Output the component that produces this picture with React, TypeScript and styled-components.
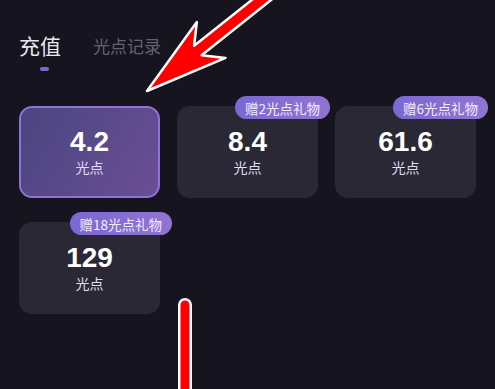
import React from "react";
import styled, { createGlobalStyle } from "styled-components";

const GlobalStyle = createGlobalStyle`
  html, body {
    margin: 0;
    padding: 0;
    background: #16141f;
    width: 495px;
    height: 389px;
    overflow: hidden;
  }
  body {
    font-family: "Noto Sans", "Noto Sans CJK SC", sans-serif;
  }
`;

const Page = styled.div`
  position: relative;
  width: 495px;
  height: 389px;
  box-sizing: border-box;
  padding: 31px 18px 0 19px;
  background: #16141f;
`;

const Tabs = styled.div`
  display: flex;
  align-items: center;
  gap: 32px;
  height: 28px;
`;

const Tab = styled.div<{ $active?: boolean }>`
  font-family: "Noto Sans CJK SC", sans-serif;
  font-size: ${(p) => (p.$active ? "21px" : "17px")};
  line-height: 28px;
  color: ${(p) => (p.$active ? "#e9e7f0" : "#64616f")};
  margin-top: ${(p) => (p.$active ? "0" : "2px")};
`;

const Indicator = styled.div`
  width: 9px;
  height: 4px;
  border-radius: 2px;
  background: #7a66d2;
  margin: 8px 0 0 21px;
`;

const Grid = styled.div`
  display: grid;
  grid-template-columns: repeat(3, 141px);
  column-gap: 17px;
  row-gap: 24px;
  margin-top: 35px;
`;

const Card = styled.div<{ $selected?: boolean }>`
  position: relative;
  height: 92px;
  box-sizing: border-box;
  border-radius: 13px;
  display: flex;
  flex-direction: column;
  align-items: center;
  justify-content: center;
  padding-bottom: 2px;
  background: ${(p) =>
    p.$selected
      ? "linear-gradient(120deg, #4b4580 0%, #5a4a8a 50%, #6c4e95 100%)"
      : "#2a2834"};
  border: 2px solid ${(p) => (p.$selected ? "#8e72d6" : "transparent")};
`;

const Amount = styled.div`
  font-family: "Liberation Sans", "Noto Sans", sans-serif;
  font-weight: 700;
  font-size: 28px;
  line-height: 31px;
  color: #ffffff;
`;

const Unit = styled.div`
  font-family: "Noto Sans CJK SC", sans-serif;
  font-size: 14px;
  line-height: 20px;
  color: #e2def0;
`;

const Badge = styled.div`
  position: absolute;
  top: -12px;
  right: -14px;
  height: 23px;
  padding: 0 10px;
  border-radius: 12px;
  display: flex;
  align-items: center;
  background: linear-gradient(90deg, #7b68d2 0%, #9174d2 100%);
  font-family: "Noto Sans CJK SC", sans-serif;
  font-size: 13.5px;
  color: #f1ecff;
  white-space: nowrap;
`;

const Overlay = styled.svg`
  position: absolute;
  left: 0;
  top: 0;
  width: 495px;
  height: 389px;
  pointer-events: none;
`;

const items = [
  { amount: "4.2", gift: "", selected: true },
  { amount: "8.4", gift: "赠2光点礼物" },
  { amount: "61.6", gift: "赠6光点礼物" },
  { amount: "129", gift: "赠18光点礼物" },
];

export default function App() {
  return (
    <>
      <GlobalStyle />
      <Page>
        <Tabs>
          <Tab $active>充值</Tab>
          <Tab>光点记录</Tab>
        </Tabs>
        <Indicator />
        <Grid>
          {items.map((it) => (
            <Card key={it.amount} $selected={it.selected}>
              {it.gift && <Badge>{it.gift}</Badge>}
              <Amount>{it.amount}</Amount>
              <Unit>光点</Unit>
            </Card>
          ))}
        </Grid>
        <Overlay viewBox="0 0 495 389">
          <g transform="translate(147 91) rotate(-38.5)">
            <polygon
              points="0,0 82,-23 65,-6 260,-6 260,6 65,6 82,23"
              fill="#ff0000"
              stroke="#ffffff"
              strokeWidth="2.5"
              strokeLinejoin="round"
            />
          </g>
          <line x1="185" y1="305" x2="185" y2="420" stroke="#ffffff" strokeWidth="14" strokeLinecap="round" />
          <line x1="185" y1="305" x2="185" y2="420" stroke="#ff0000" strokeWidth="9" strokeLinecap="round" />
        </Overlay>
      </Page>
    </>
  );
}
